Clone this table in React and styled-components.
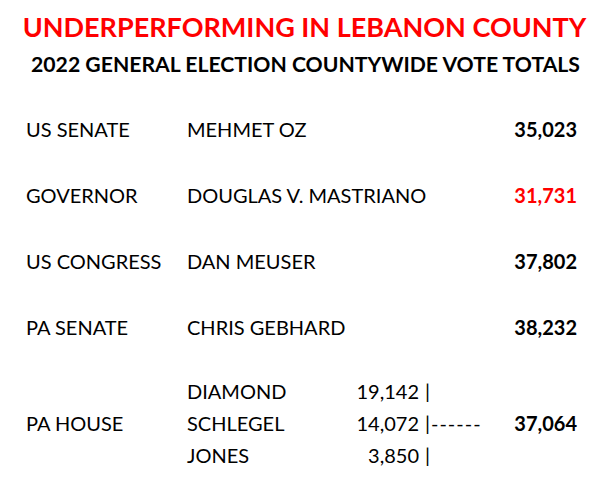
import React from 'react';
import styled, { createGlobalStyle } from 'styled-components';

const races = [
    { office: 'US SENATE', name: 'MEHMET OZ', total: '35,023' },
    { office: 'GOVERNOR', name: 'DOUGLAS V. MASTRIANO', total: '31,731', low: true },
    { office: 'US CONGRESS', name: 'DAN MEUSER', total: '37,802' },
    { office: 'PA SENATE', name: 'CHRIS GEBHARD', total: '38,232' },
];

const house = [
    { name: 'DIAMOND', votes: '19,142', tail: '|' },
    { name: 'SCHLEGEL', votes: '14,072', tail: '|------' },
    { name: 'JONES', votes: '3,850', tail: '|' },
];

const App = () => {
    return (
        <>
            <GlobalStyle />
            <Page>
                <Header>
                    <Title>UNDERPERFORMING IN LEBANON COUNTY</Title>
                    <Subtitle>2022 GENERAL ELECTION COUNTYWIDE VOTE TOTALS</Subtitle>
                </Header>
                <Table>
                    {races.map((race, i) => (
                        <Row key={i}>
                            <Office>{race.office}</Office>
                            <Name>{race.name}</Name>
                            <Total $low={race.low}>{race.total}</Total>
                        </Row>
                    ))}
                    <HouseRow>
                        <HouseOffice>PA HOUSE</HouseOffice>
                        {house.map((c, i) => (
                            <React.Fragment key={i}>
                                <HouseName $row={i + 1}>{c.name}</HouseName>
                                <Votes $row={i + 1}>
                                    <Count>{c.votes}</Count>
                                    <Tail>{c.tail}</Tail>
                                </Votes>
                            </React.Fragment>
                        ))}
                        <HouseTotal>37,064</HouseTotal>
                    </HouseRow>
                </Table>
            </Page>
        </>
    );
}

const GlobalStyle = createGlobalStyle`
    html, body {
        margin: 0;
        padding: 0;
        background: #ffffff;
    }
    body {
        font-family: Lato, "Open Sans", sans-serif;
        color: #000000;
    }
`

const Page = styled.div`
    width: 615px;
    height: 484px;
    box-sizing: border-box;
    padding-top: 10px;
    overflow: hidden;
`

const Header = styled.div`
    display: flex;
    flex-direction: column;
    align-items: center;
    white-space: nowrap;
`

const Title = styled.div`
    color: #ff0000;
    font-weight: 700;
    font-size: 27px;
    line-height: 34px;
    margin-left: -6px;
`

const Subtitle = styled.div`
    font-weight: 700;
    font-size: 21.2px;
    line-height: 30px;
    margin-top: 5px;
    margin-left: -4px;
`

const Table = styled.div`
    display: flex;
    flex-direction: column;
    margin-top: 17px;
    padding: 0 38px 0 26px;
    white-space: nowrap;
`

const Row = styled.div`
    display: grid;
    grid-template-columns: 161px 1fr auto;
    align-items: center;
    height: 66px;
    font-size: 20px;
`

const Office = styled.div``

const Name = styled.div``

const Total = styled.div`
    font-weight: 700;
    color: ${p => (p.$low ? '#ff0000' : '#000000')};
`

const HouseRow = styled.div`
    display: grid;
    grid-template-columns: 161px 150px 1fr auto;
    grid-template-rows: repeat(3, 32px);
    align-items: center;
    margin-top: 15px;
    font-size: 20px;
`

const HouseOffice = styled.div`
    grid-column: 1;
    grid-row: 1 / 4;
`

const HouseName = styled.div`
    grid-column: 2;
    grid-row: ${p => p.$row};
`

const Votes = styled.div`
    grid-column: 3;
    grid-row: ${p => p.$row};
    display: flex;
    gap: 6px;
`

const Count = styled.span`
    width: 82px;
    text-align: right;
`

const Tail = styled.span`
    letter-spacing: 1px;
`

const HouseTotal = styled.div`
    grid-column: 4;
    grid-row: 1 / 4;
    font-weight: 700;
`

export default App;
